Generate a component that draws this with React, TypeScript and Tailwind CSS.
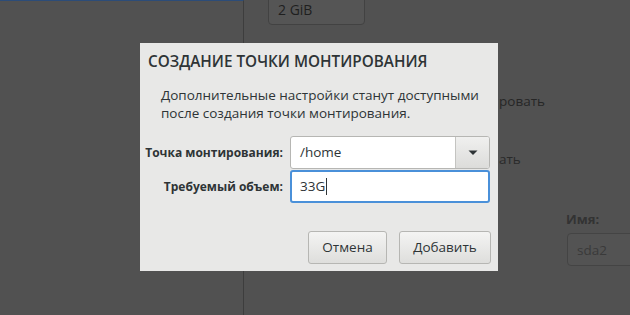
import React from "react";

export default function App() {
  const font = { fontFamily: '"Open Sans", "Noto Sans", sans-serif' };
  return (
    <div
      className="relative flex w-[630px] h-[315px] overflow-hidden bg-[#515151] text-[#2e3436]"
      style={font}
    >
      {/* left dimmed panel */}
      <div className="w-[244px] h-full shrink-0 border-r border-[#3d3d3d] border-t border-t-[#2c4c78]" />
      {/* right dimmed panel */}
      <div className="flex-1 flex flex-col">
        <div className="ml-[24px] mt-[-9px] w-[97px] h-[34px] rounded-[4px] border border-[#424242] bg-[#555555] pl-[9px] pt-[9px] text-[14px] leading-[18px] text-[#1f1f1f]">
          2 GiB
        </div>
        <div className="ml-[255px] mt-[67px] text-[13.5px] leading-[18px] text-[#262626]">ровать</div>
        <div className="ml-[255px] mt-[40px] text-[13.5px] leading-[18px] text-[#2a2a2a]">ать</div>
        <div className="ml-[322px] mt-[42px] text-[13px] leading-[18px] font-bold text-[#333333]">Имя:</div>
        <div className="ml-[323px] mt-[5px] h-[33px] w-[80px] rounded-[4px] border border-[#444444] bg-[#535353] pl-[9px] pt-[7px] text-[13.5px] leading-[18px] text-[#3a3a3a]">
          sda2
        </div>
      </div>

      {/* dialog */}
      <div className="absolute left-[140px] top-[43px] w-[358px] h-[228px] bg-[#e8e8e7] flex flex-col">
        <div className="pl-[8px] pt-[8px] text-[15.3px] leading-[20px] font-semibold whitespace-nowrap">
          СОЗДАНИЕ ТОЧКИ МОНТИРОВАНИЯ
        </div>
        <div className="pl-[21px] pt-[15px] text-[13.5px] leading-[18px] whitespace-nowrap">
          <div>Дополнительные настройки станут доступными</div>
          <div>после создания точки монтирования.</div>
        </div>
        <div className="mt-[14px] grid grid-cols-[143px_200px] gap-x-[7px] gap-y-[1px]">
          <div className="flex items-center justify-end text-[12px] font-bold whitespace-nowrap">Точка монтирования:</div>
          <div className="flex h-[33px] rounded-[3px] border border-[#b6b6b3] bg-white overflow-hidden">
            <div className="flex-1 flex items-center pl-[9px] text-[13.5px]">/home</div>
            <div className="w-[34px] flex items-center justify-center border-l border-[#c4c4c1] bg-gradient-to-b from-[#f0f0ef] to-[#dcdcda]">
              <svg width="10" height="6" viewBox="0 0 10 6">
                <path d="M0.5 0.5 L9.5 0.5 L5 5 Z" fill="#2e3436" />
              </svg>
            </div>
          </div>
          <div className="flex items-center justify-end text-[12px] font-bold whitespace-nowrap">Требуемый объем:</div>
          <div className="flex items-center h-[33px] rounded-[3px] border-2 border-[#4a90d9] bg-white pl-[8px] text-[13.5px]">
            <span>33G</span>
            <span className="ml-[1px] inline-block w-[1px] h-[17px] bg-[#2e3436]" />
          </div>
        </div>
        <div className="mt-[28px] flex justify-end gap-[12px] pr-[7px]">
          <button className="w-[79px] h-[33px] rounded-[3px] border border-[#b6b6b3] bg-gradient-to-b from-[#f4f4f3] to-[#dededc] text-[13.5px] text-[#2e3436]">
            Отмена
          </button>
          <button className="w-[92px] h-[33px] rounded-[3px] border border-[#b6b6b3] bg-gradient-to-b from-[#f4f4f3] to-[#dededc] text-[13.5px] text-[#2e3436]">
            Добавить
          </button>
        </div>
      </div>
    </div>
  );
}
